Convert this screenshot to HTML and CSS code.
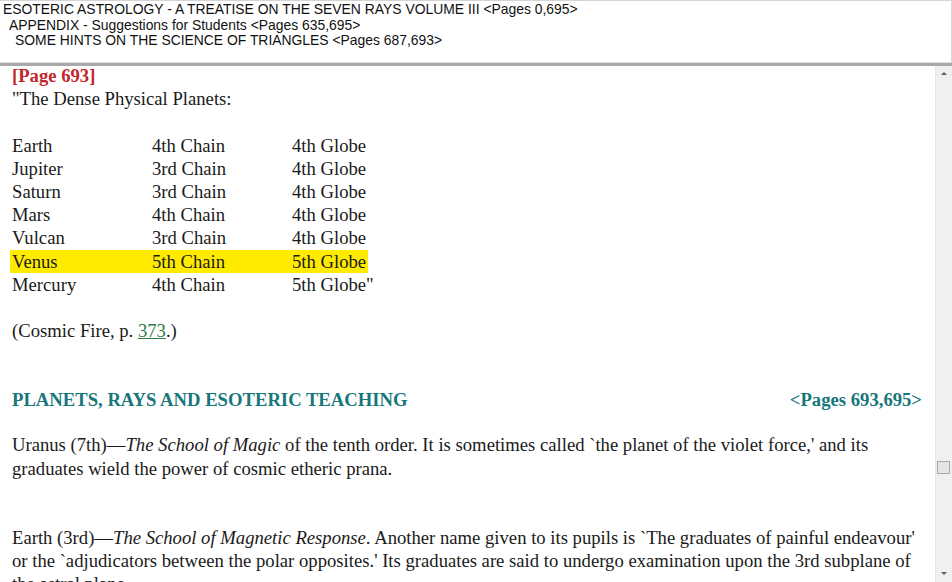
FILE: index.html
```html
<!DOCTYPE html>
<html>
<head>
<meta charset="utf-8">
<link rel="stylesheet" href="styles.css">
</head>
<body>
<div class="app">
  <header class="crumbs">
    <div class="crumb l0">ESOTERIC ASTROLOGY - A TREATISE ON THE SEVEN RAYS VOLUME III &lt;Pages 0,695&gt;</div>
    <div class="crumb l1">APPENDIX - Suggestions for Students &lt;Pages 635,695&gt;</div>
    <div class="crumb l2">SOME HINTS ON THE SCIENCE OF TRIANGLES &lt;Pages 687,693&gt;</div>
  </header>
  <div class="viewer">
    <main class="doc">
      <div class="pagemark">[Page 693]</div>
      <p class="line">"The Dense Physical Planets:</p>
      <div class="table">
        <div class="row"><span>Earth</span><span>4th Chain</span><span>4th Globe</span></div>
        <div class="row"><span>Jupiter</span><span>3rd Chain</span><span>4th Globe</span></div>
        <div class="row"><span>Saturn</span><span>3rd Chain</span><span>4th Globe</span></div>
        <div class="row"><span>Mars</span><span>4th Chain</span><span>4th Globe</span></div>
        <div class="row"><span>Vulcan</span><span>3rd Chain</span><span>4th Globe</span></div>
        <div class="row hl"><span>Venus</span><span>5th Chain</span><span>5th Globe</span></div>
        <div class="row"><span>Mercury</span><span>4th Chain</span><span>5th Globe"</span></div>
      </div>
      <p class="line cite">(Cosmic Fire, p. <a class="ref">373</a>.)</p>
      <h2 class="section"><span>PLANETS, RAYS AND ESOTERIC TEACHING</span><span>&lt;Pages 693,695&gt;</span></h2>
      <p class="para">Uranus (7th)—<i>The School of Magic</i> of the tenth order. It is sometimes called `the planet of the violet force,' and its graduates wield the power of cosmic etheric prana.</p>
      <p class="para second">Earth (3rd)—<i>The School of Magnetic Response</i>. Another name given to its pupils is `The graduates of painful endeavour' or the `adjudicators between the polar opposites.' Its graduates are said to undergo examination upon the 3rd subplane of the astral plane.</p>
    </main>
    <div class="scrollbar">
      <div class="arrow up"></div>
      <div class="track"><div class="thumb"></div></div>
      <div class="arrow down"></div>
    </div>
  </div>
</div>
</body>
</html>
```
FILE: styles.css
```css
html, body {
  margin: 0;
  padding: 0;
  background: #ffffff;
}
.app {
  width: 952px;
  height: 582px;
  display: flex;
  flex-direction: column;
  overflow: hidden;
  box-sizing: border-box;
  border-top: 1px solid #d4d4d4;
}
.crumbs {
  height: 62px;
  flex: none;
  box-sizing: border-box;
  padding: 1px 0 0 3px;
  border-bottom: 1px solid #e2e2e2;
  border-right: 1px solid #d8d8d8;
  font-family: "Liberation Sans", Arial, sans-serif;
  font-size: 13.9px;
  line-height: 15.6px;
  color: #111;
}
.crumb.l1 { padding-left: 6px; }
.crumb.l2 { padding-left: 12px; }
.viewer {
  flex: 1;
  display: flex;
  border-top: 3px solid #a9a9a9;
  min-height: 0;
}
.doc {
  flex: 1;
  padding: 0 0 0 12px;
  font-family: "Liberation Serif", "Times New Roman", serif;
  font-size: 18.67px;
  line-height: 23.2px;
  color: #1a1a1a;
  overflow: hidden;
}
.pagemark {
  color: #c1272d;
  font-weight: bold;
  margin-top: -2px;
}
.line { margin: 0; }
.table { margin-top: 23.2px; }
.row {
  display: grid;
  grid-template-columns: 140px 140px 76px;
  width: 356px;
  margin-left: -2px;
  padding-left: 2px;
  white-space: nowrap;
}
.row.hl { background: #ffeb00; }
.cite { margin-top: 23.2px; }
.ref {
  color: #2a7a4a;
  text-decoration: underline;
}
.section {
  display: flex;
  justify-content: space-between;
  margin: 46px 13px 0 0;
  font-size: 18.67px;
  font-weight: bold;
  line-height: 23px;
  color: #17777b;
}
.para {
  margin: 22px 0 0 0;
  width: 912px;
}
.para.second { margin-top: 46px; }
.scrollbar {
  width: 17px;
  flex: none;
  display: flex;
  flex-direction: column;
  background: #f0f0f0;
  border-left: 1px solid #e6e6e6;
  box-sizing: border-box;
}
.arrow {
  height: 17px;
  flex: none;
  position: relative;
}
.arrow::after {
  content: "";
  position: absolute;
  left: 5px;
  width: 0;
  height: 0;
  border-left: 3px solid transparent;
  border-right: 3px solid transparent;
}
.arrow.up::after { top: 6px; border-bottom: 3px solid #606060; }
.arrow.down::after { top: 7px; border-top: 3px solid #606060; }
.track {
  flex: 1;
  padding-top: 378px;
}
.thumb {
  width: 13px;
  height: 13px;
  margin-left: 1px;
  box-sizing: border-box;
  border: 1px solid #a8a8a8;
  background: #e4e4e4;
}
```
